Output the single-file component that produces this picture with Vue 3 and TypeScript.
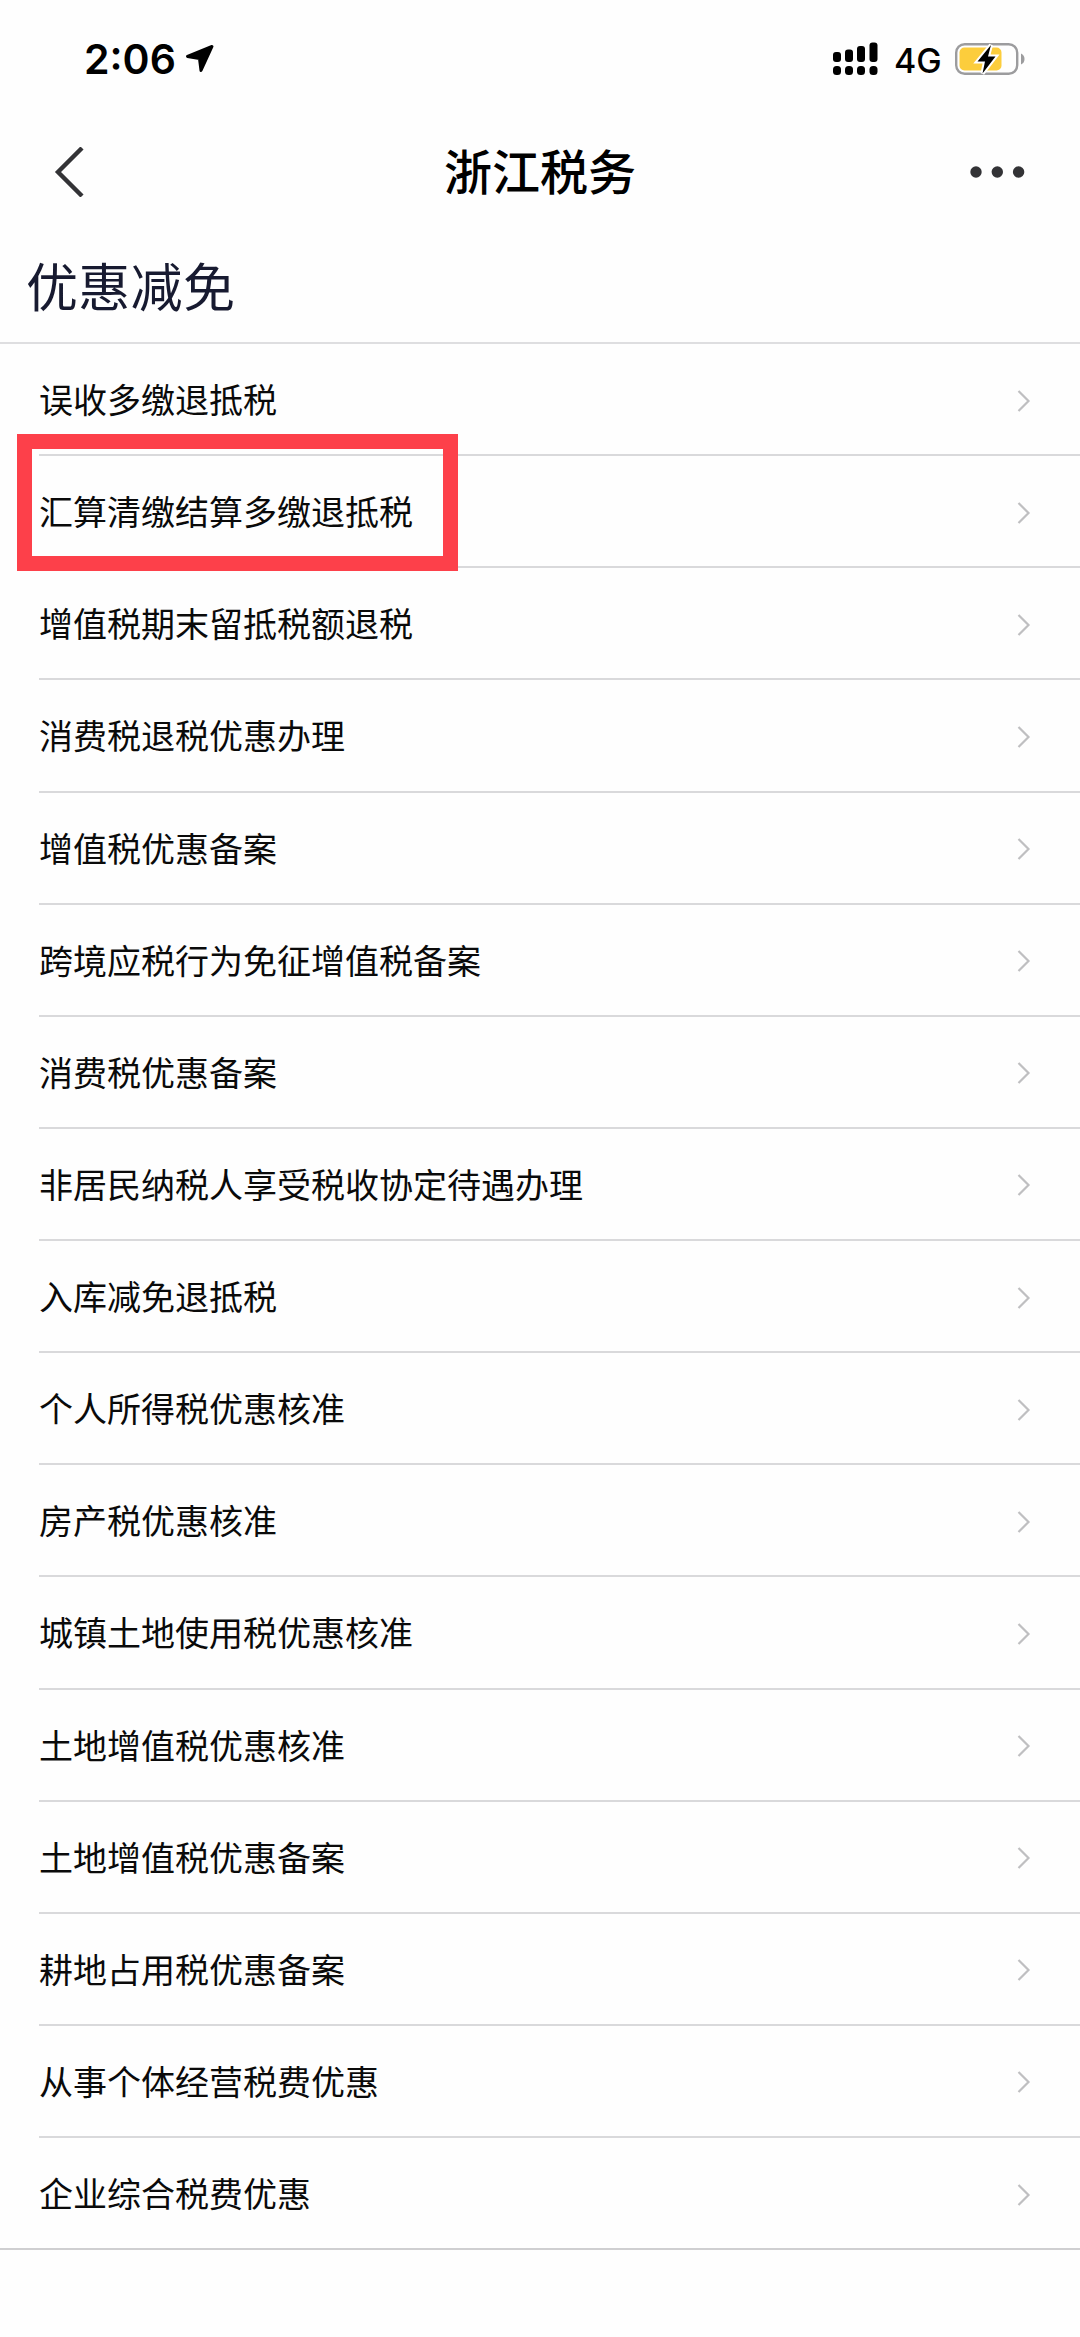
<script setup lang="ts">
const items: string[] = [
  '误收多缴退抵税',
  '汇算清缴结算多缴退抵税',
  '增值税期末留抵税额退税',
  '消费税退税优惠办理',
  '增值税优惠备案',
  '跨境应税行为免征增值税备案',
  '消费税优惠备案',
  '非居民纳税人享受税收协定待遇办理',
  '入库减免退抵税',
  '个人所得税优惠核准',
  '房产税优惠核准',
  '城镇土地使用税优惠核准',
  '土地增值税优惠核准',
  '土地增值税优惠备案',
  '耕地占用税优惠备案',
  '从事个体经营税费优惠',
  '企业综合税费优惠',
]
const highlighted = 1
</script>

<template>
  <div class="screen">
    <div class="status">
      <div class="status-left">
        <span class="time">2:06</span>
        <svg class="location" width="30" height="30" viewBox="0 0 30 30">
          <path d="M27 2.5 L2.5 12.5 L14.5 14.5 L16 26.5 Z" fill="#000" stroke="#000" stroke-width="3" stroke-linejoin="round" />
        </svg>
      </div>
      <div class="status-right">
        <svg width="46" height="34" viewBox="0 0 46 34">
          <rect x="0" y="10" width="8" height="10" rx="3" />
          <rect x="12" y="7.5" width="8" height="12.5" rx="3" />
          <rect x="24" y="4" width="8" height="16" rx="3" />
          <rect x="36.500" y="0.500" width="8" height="19.500" rx="3" />
          <rect x="0" y="24" width="8" height="9" rx="3.500" />
          <rect x="12" y="24" width="8" height="9" rx="3.500" />
          <rect x="24" y="24" width="8" height="9" rx="3.500" />
          <rect x="36.500" y="24" width="8" height="9" rx="3.500" />
        </svg>
        <span class="network">4G</span>
        <svg class="battery" width="72" height="36" viewBox="0 0 72 36">
          <rect x="1.200" y="3.200" width="61" height="29.600" rx="8.500" fill="none" stroke="#9c9c9e" stroke-width="2.400" />
          <rect x="4.500" y="6.500" width="42" height="23" rx="5" fill="#fccd3c" />
          <path d="M66 12.500 Q69.500 14 69.500 18 Q69.500 22 66 23.500 Z" fill="#9c9c9e" />
          <path d="M36 4 L22.500 20.500 L30 20.500 L27.500 32.500 L40.500 15.500 L33 15.500 Z" fill="#000" stroke="#fff" stroke-width="4" paint-order="stroke" />
        </svg>
      </div>
    </div>

    <header class="nav">
      <svg class="back" width="32" height="50" viewBox="0 0 32 50">
        <path d="M28 1 L4 25 L28 49" fill="none" stroke="#333336" stroke-width="4.400" />
      </svg>
      <h1>浙江税务</h1>
      <svg class="more" width="56" height="12" viewBox="0 0 56 12">
        <circle cx="6" cy="6" r="5.700" />
        <circle cx="27.300" cy="6" r="5.700" />
        <circle cx="48.600" cy="6" r="5.700" />
      </svg>
    </header>

    <h2 class="section">优惠减免</h2>

    <ul class="list">
      <li v-for="(item, i) in items" :key="item" class="row">
        <span class="label">{{ item }}</span>
        <svg class="chevron" width="14" height="22" viewBox="0 0 14 22">
          <path d="M1.500 1 L11.500 11 L1.500 21" fill="none" stroke="#bfbfc1" stroke-width="2.200" />
        </svg>
        <span v-if="i === highlighted" class="marker"></span>
      </li>
    </ul>
  </div>
</template>

<style>
body {
  margin: 0;
  background: #fefefe;
}
</style>

<style scoped>
.screen {
  width: 1080px;
  height: 2337px;
  overflow: hidden;
  background: #fefefe;
  color: #0a0a0a;
  font-family: "Noto Sans CJK SC", sans-serif;
}
.status {
  height: 116px;
  box-sizing: border-box;
  display: flex;
  justify-content: space-between;
  padding: 0 53px 0 84px;
  color: #000;
  font-family: Inter, sans-serif;
}
.status-left,
.status-right {
  height: 118px;
  display: flex;
  align-items: center;
}
.time {
  width: 92px;
  font-size: 41px;
  font-weight: 600;
  white-space: nowrap;
}
.location {
  margin-left: 9px;
}
.status-right {
  gap: 15px;
}
.network {
  width: 46px;
  font-size: 34px;
  font-weight: 500;
  line-height: 40px;
  margin-top: 3px;
}
.nav {
  height: 112px;
  display: flex;
  align-items: center;
  justify-content: space-between;
  padding: 0 54px;
  color: #333336;
}
.back {
  margin-right: 24px;
}
.more {
  fill: #333336;
}
.nav h1 {
  margin: 0;
  padding-bottom: 6px;
  font-size: 48px;
  line-height: 72px;
  font-weight: 500;
  color: #000;
}
.section {
  margin: 0;
  height: 114px;
  padding-left: 26px;
  font-size: 52px;
  line-height: 113px;
  font-weight: 400;
  letter-spacing: 0.3px;
  color: #171a30;
}
.list {
  margin: 0;
  padding: 0;
  list-style: none;
  border-top: 2px solid #dedee0;
  border-bottom: 2px solid #cfcfd1;
}
.row {
  position: relative;
  height: 112.130px;
  box-sizing: border-box;
  margin-left: 39px;
  padding-right: 49px;
  display: flex;
  align-items: center;
  justify-content: space-between;
}
.row:not(:last-child) {
  border-bottom: 2px solid #d9d9db;
}
.row:last-child {
  height: 110.130px;
}
.label {
  font-size: 34px;
  line-height: 50px;
}
.chevron {
  margin-top: 3px;
}
.marker {
  position: absolute;
  left: -22px;
  top: -22px;
  width: 441px;
  height: 137px;
  box-sizing: border-box;
  border: 15.500px solid #fd404a;
}
</style>
